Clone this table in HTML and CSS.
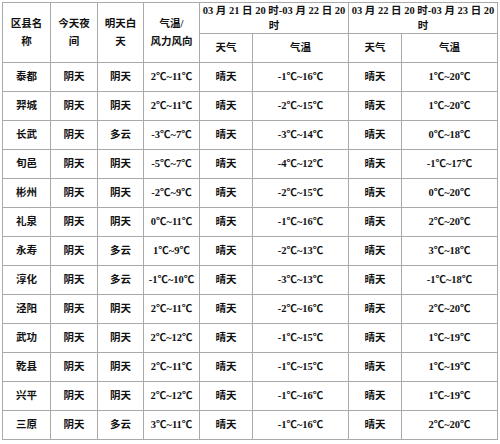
FILE: index.html
```html
<!DOCTYPE html>
<html lang="zh">
<head>
<meta charset="utf-8">
<link rel="stylesheet" href="styles.css">
</head>
<body>
<div class="wrap">
<table class="wx">
<colgroup>
<col class="c1"><col class="c2"><col class="c3"><col class="c4"><col class="c5"><col class="c6"><col class="c7"><col class="c8">
</colgroup>
<thead>
<tr class="h1">
<th rowspan="2" class="tall">区县名<br>称</th>
<th rowspan="2" class="tall">今天夜<br>间</th>
<th rowspan="2" class="tall">明天白<br>天</th>
<th rowspan="2" class="tall">气温/<br>风力风向</th>
<th colspan="2" class="date">03 月 21 日 20 时-03 月 22 日 20<br>时</th>
<th colspan="2" class="date">03 月 22 日 20 时-03 月 23 日 20<br>时</th>
</tr>
<tr class="h2">
<th>天气</th><th>气温</th><th>天气</th><th>气温</th>
</tr>
</thead>
<tbody>
<tr><td>泰都</td><td>阴天</td><td>阴天</td><td>2℃~11℃</td><td>晴天</td><td>-1℃~16℃</td><td>晴天</td><td>1℃~20℃</td></tr>
<tr><td>羿城</td><td>阴天</td><td>阴天</td><td>2℃~11℃</td><td>晴天</td><td>-2℃~15℃</td><td>晴天</td><td>1℃~20℃</td></tr>
<tr><td>长武</td><td>阴天</td><td>多云</td><td>-3℃~7℃</td><td>晴天</td><td>-3℃~14℃</td><td>晴天</td><td>0℃~18℃</td></tr>
<tr><td>旬邑</td><td>阴天</td><td>阴天</td><td>-5℃~7℃</td><td>晴天</td><td>-4℃~12℃</td><td>晴天</td><td>-1℃~17℃</td></tr>
<tr><td>彬州</td><td>阴天</td><td>阴天</td><td>-2℃~9℃</td><td>晴天</td><td>-2℃~15℃</td><td>晴天</td><td>0℃~20℃</td></tr>
<tr><td>礼泉</td><td>阴天</td><td>阴天</td><td>0℃~11℃</td><td>晴天</td><td>-1℃~16℃</td><td>晴天</td><td>2℃~20℃</td></tr>
<tr><td>永寿</td><td>阴天</td><td>多云</td><td>1℃~9℃</td><td>晴天</td><td>-2℃~13℃</td><td>晴天</td><td>3℃~18℃</td></tr>
<tr><td>淳化</td><td>阴天</td><td>多云</td><td>-1℃~10℃</td><td>晴天</td><td>-3℃~13℃</td><td>晴天</td><td>-1℃~18℃</td></tr>
<tr><td>泾阳</td><td>阴天</td><td>阴天</td><td>2℃~11℃</td><td>晴天</td><td>-2℃~16℃</td><td>晴天</td><td>2℃~20℃</td></tr>
<tr><td>武功</td><td>阴天</td><td>阴天</td><td>2℃~12℃</td><td>晴天</td><td>-1℃~15℃</td><td>晴天</td><td>1℃~19℃</td></tr>
<tr><td>乾县</td><td>阴天</td><td>阴天</td><td>2℃~11℃</td><td>晴天</td><td>-1℃~15℃</td><td>晴天</td><td>1℃~19℃</td></tr>
<tr><td>兴平</td><td>阴天</td><td>阴天</td><td>2℃~12℃</td><td>晴天</td><td>-1℃~16℃</td><td>晴天</td><td>1℃~19℃</td></tr>
<tr><td>三原</td><td>阴天</td><td>多云</td><td>3℃~11℃</td><td>晴天</td><td>-1℃~16℃</td><td>晴天</td><td>2℃~20℃</td></tr>
</tbody>
</table>
</div>
</body>
</html>
```
FILE: styles.css
```css
html, body {
  margin: 0;
  padding: 0;
  background: #ffffff;
}
.wrap {
  padding: 2px 0 0 2px;
}
.wx {
  border-collapse: collapse;
  table-layout: fixed;
  width: 495px;
  font-family: "Liberation Serif", "Noto Sans CJK SC", serif;
  font-size: 10.5px;
  font-weight: bold;
  color: #111111;
}
.wx th, .wx td {
  border: 1px solid #a9a9a9;
  padding: 0;
  text-align: center;
  vertical-align: middle;
  font-weight: bold;
  line-height: 14px;
}
.c1 { width: 48px; }
.c2 { width: 47px; }
.c3 { width: 46px; }
.c4 { width: 56px; }
.c5 { width: 53px; }
.c6 { width: 96px; }
.c7 { width: 53px; }
.c8 { width: 96px; }
.h1 th.date {
  height: 30px;
  line-height: 15px;
  vertical-align: middle;
}
.h1 th.tall {
  line-height: 18px;
}
.h2 th {
  height: 28px;
}
.wx tbody td {
  height: 28px;
}
```
